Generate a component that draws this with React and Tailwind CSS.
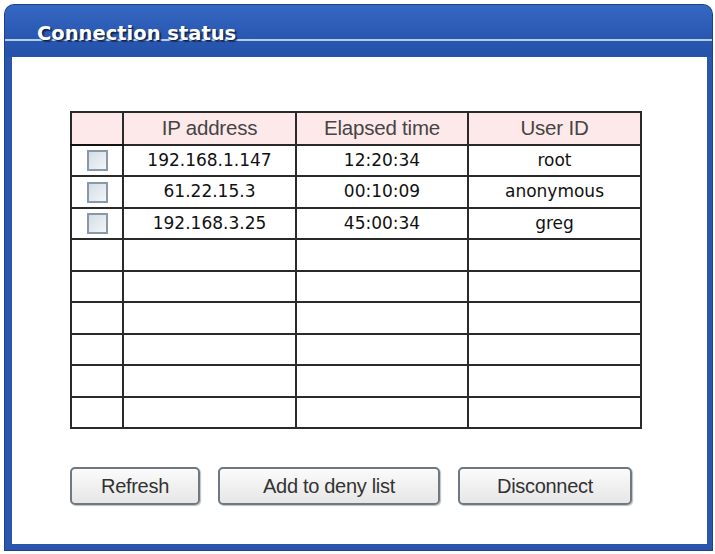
const ROWS = [
  { ip: "192.168.1.147", elapsed: "12:20:34", user: "root" },
  { ip: "61.22.15.3", elapsed: "00:10:09", user: "anonymous" },
  { ip: "192.168.3.25", elapsed: "45:00:34", user: "greg" },
  null,
  null,
  null,
  null,
  null,
  null,
];

function Checkbox() {
  return (
    <span className="inline-block h-[21px] w-[21px] border-2 border-[#8c98a5] bg-[linear-gradient(135deg,#d4dde7,#f3f6f9)]" />
  );
}

function Button({ label, width }) {
  return (
    <button
      type="button"
      className={`${width} h-[38px] rounded-[5px] border-2 border-[#6d7882] bg-[linear-gradient(#fbfbfb,#e6e6e6)] text-[20px] tracking-[-0.3px] text-[#333] shadow-[1px_1px_1px_rgba(0,0,0,0.25)] [font-family:'Liberation_Sans',Arial,sans-serif]`}
    >
      {label}
    </button>
  );
}

export default function App() {
  return (
    <div className="min-h-[554px] w-[715px] bg-white pl-[5px] pt-[5px]">
      <div className="flex h-[545px] w-[707px] flex-col overflow-hidden rounded-t-[9px] bg-[#2a56ad] shadow-[0_0_0_1px_#1e418c]">
        <header className="relative h-[52px] shrink-0 bg-[linear-gradient(#3568c2,#2a58b2_60%,#2452aa)]">
          <div className="absolute left-0 right-0 top-[34px] h-[2px] bg-[#b5cdf0]" />
          <h1 className="relative pl-[32px] pt-[17px] text-[19.5px] font-bold leading-[24px] text-white [font-family:'DejaVu_Sans',Verdana,sans-serif] [text-shadow:1px_1px_1px_#0b1f4a,2px_2px_1px_rgba(10,30,70,0.6)]">
            Connection status
          </h1>
        </header>

        <div className="mb-[6px] ml-[7px] mr-[5px] flex-1 bg-white pl-[58px] pt-[54px]">
          <table className="w-[570px] table-fixed border-collapse border-2 border-[#2a2a2a]">
            <colgroup>
              <col className="w-[52px]" />
              <col className="w-[173px]" />
              <col className="w-[172px]" />
              <col className="w-[173px]" />
            </colgroup>
            <thead>
              <tr className="h-[32px] bg-[#fde9e9] text-[20.5px] font-normal tracking-[-0.2px] text-[#454545] [font-family:'Liberation_Sans',Arial,sans-serif]">
                <th className="border-2 border-[#2a2a2a] border-b-[#111]" />
                <th className="border-2 border-[#2a2a2a] font-normal">IP address</th>
                <th className="border-2 border-[#2a2a2a] font-normal">Elapsed time</th>
                <th className="border-2 border-[#2a2a2a] font-normal">User ID</th>
              </tr>
            </thead>
            <tbody className="text-[17px] text-[#111] [font-family:'DejaVu_Sans',Tahoma,sans-serif]">
              {ROWS.map((row, i) => (
                <tr key={i} className="h-[31.5px]">
                  <td className="border-2 border-[#2a2a2a] text-center align-middle">
                    {row ? (
                      <span className="flex justify-center">
                        <Checkbox />
                      </span>
                    ) : null}
                  </td>
                  <td className="border-2 border-[#2a2a2a] text-center">{row?.ip}</td>
                  <td className="border-2 border-[#2a2a2a] text-center">{row?.elapsed}</td>
                  <td className="border-2 border-[#2a2a2a] text-center">{row?.user}</td>
                </tr>
              ))}
            </tbody>
          </table>

          <div className="mt-[38px] flex gap-[18px]">
            <Button label="Refresh" width="w-[130px]" />
            <Button label="Add to deny list" width="w-[222px]" />
            <Button label="Disconnect" width="w-[174px]" />
          </div>
        </div>
      </div>
    </div>
  );
}
